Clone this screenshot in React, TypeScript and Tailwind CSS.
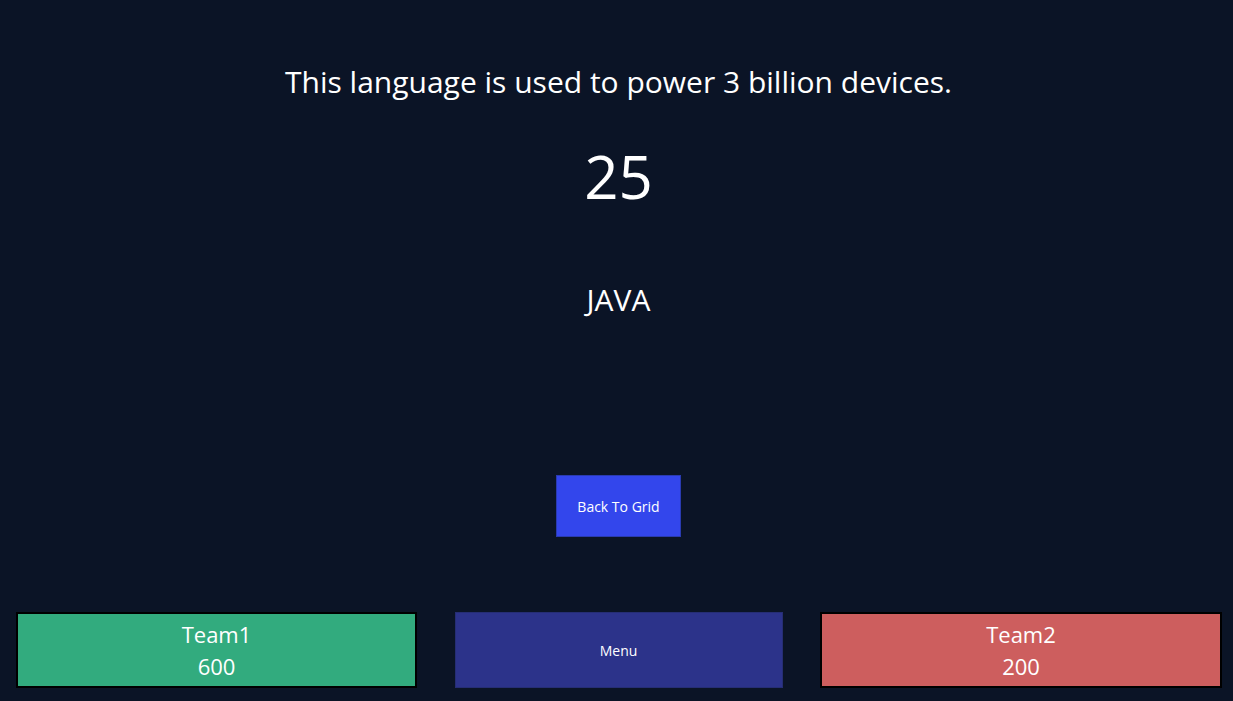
import React from "react";

const font = { fontFamily: '"Open Sans", "Noto Sans", sans-serif' };

export default function App() {
  return (
    <div
      className="w-full h-[701px] bg-[#0b1426] text-white flex flex-col items-center overflow-hidden pl-1"
      style={font}
    >
      {/* question */}
      <div className="mt-[62px] text-[30px] leading-[40px]">
        This language is used to power 3 billion devices.
      </div>

      {/* timer */}
      <div className="mt-[34px] text-[60px] leading-[80px]">25</div>

      {/* answer */}
      <div className="mt-[64px] text-[30px] leading-[40px]">JAVA</div>

      <button className="mt-[155px] w-[125px] h-[62px] bg-[#3346ec] border border-[#2a3bb0] text-[14px] text-white">
        Back To Grid
      </button>

      {/* bottom bar */}
      <div className="mt-auto mb-[13px] w-full pl-3 pr-[11px] flex items-stretch justify-between">
        <div className="w-[401px] h-[76px] bg-[#32ab7e] border-2 border-black flex flex-col items-center justify-center text-[22px] leading-[32px]">
          <span>Team1</span>
          <span>600</span>
        </div>
        <button className="w-[328px] h-[76px] bg-[#2c338a] border border-[#262e74] text-[14px] font-medium text-white">
          Menu
        </button>
        <div className="w-[402px] h-[76px] bg-[#cd5e5e] border-2 border-black flex flex-col items-center justify-center text-[22px] leading-[32px]">
          <span>Team2</span>
          <span>200</span>
        </div>
      </div>
    </div>
  );
}
